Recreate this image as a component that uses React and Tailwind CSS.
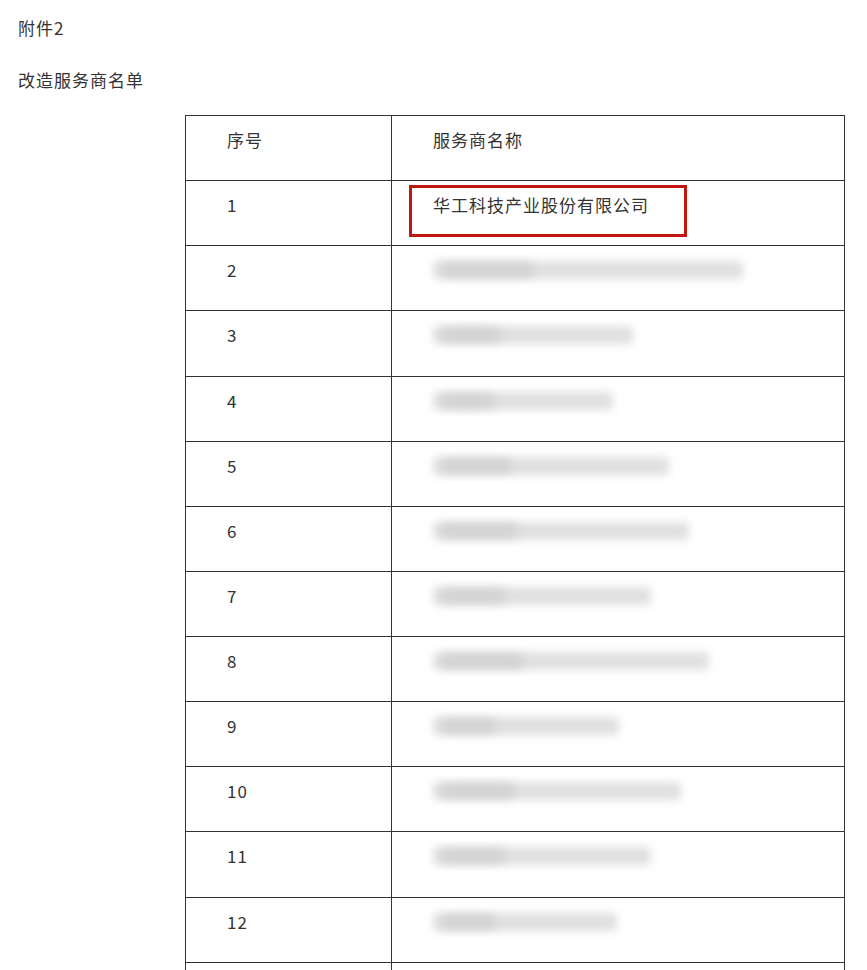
const rows = [
  { n: "1", w: 0 },
  { n: "2", w: 310 },
  { n: "3", w: 200, h: 66 },
  { n: "4", w: 180 },
  { n: "5", w: 236 },
  { n: "6", w: 256 },
  { n: "7", w: 218 },
  { n: "8", w: 276 },
  { n: "9", w: 186 },
  { n: "10", w: 248 },
  { n: "11", w: 218, h: 66 },
  { n: "12", w: 184 },
];

function Blur({ w }) {
  return (
    <div className="relative h-[24px] flex items-center">
      <div
        className="h-[18px] bg-[#e0e0e0] blur-[4px] rounded-sm"
        style={{ width: w }}
      />
      <div
        className="absolute left-[8px] h-[14px] bg-[#d2d2d2] blur-[5px] rounded-full"
        style={{ width: Math.round(w * 0.3) }}
      />
    </div>
  );
}

export default function App() {
  return (
    <div
      className="h-[970px] bg-white text-[#333] text-[17px] tracking-[1px] overflow-hidden"
      style={{ fontFamily: '"Noto Sans CJK SC", "Noto Sans", sans-serif' }}
    >
      <div className="pl-[18px] pt-[16px] leading-[24px]">附件2</div>
      <div className="pl-[18px] pt-[28px] leading-[24px]">改造服务商名单</div>
      <div className="ml-[185px] mt-[23px] w-[660px] border-t border-l border-r border-[#333]">
        <div className="flex h-[65px] border-b border-[#333]">
          <div className="w-[206px] border-r border-[#333] pl-[41px] pt-[12px] leading-[24px]">序号</div>
          <div className="flex-1 pl-[41px] pt-[12px] leading-[24px]">服务商名称</div>
        </div>
        {rows.map((r) => (
          <div
            key={r.n}
            className={`flex border-b border-[#333] ${r.h === 66 ? "h-[66px]" : "h-[65px]"}`}
          >
            <div className="w-[206px] border-r border-[#333] pl-[41px] pt-[12px] leading-[24px]">{r.n}</div>
            <div className="relative flex-1 pl-[41px] pt-[12px] leading-[24px]">
              {r.w === 0 ? (
                <>
                  <span>华工科技产业股份有限公司</span>
                  <div className="absolute left-[17px] top-[4px] w-[278px] h-[52px] border-[3px] border-[#c0160e]" />
                </>
              ) : (
                <Blur w={r.w} />
              )}
            </div>
          </div>
        ))}
        <div className="flex h-[65px]">
          <div className="w-[206px] border-r border-[#333]" />
          <div className="flex-1" />
        </div>
      </div>
    </div>
  );
}
